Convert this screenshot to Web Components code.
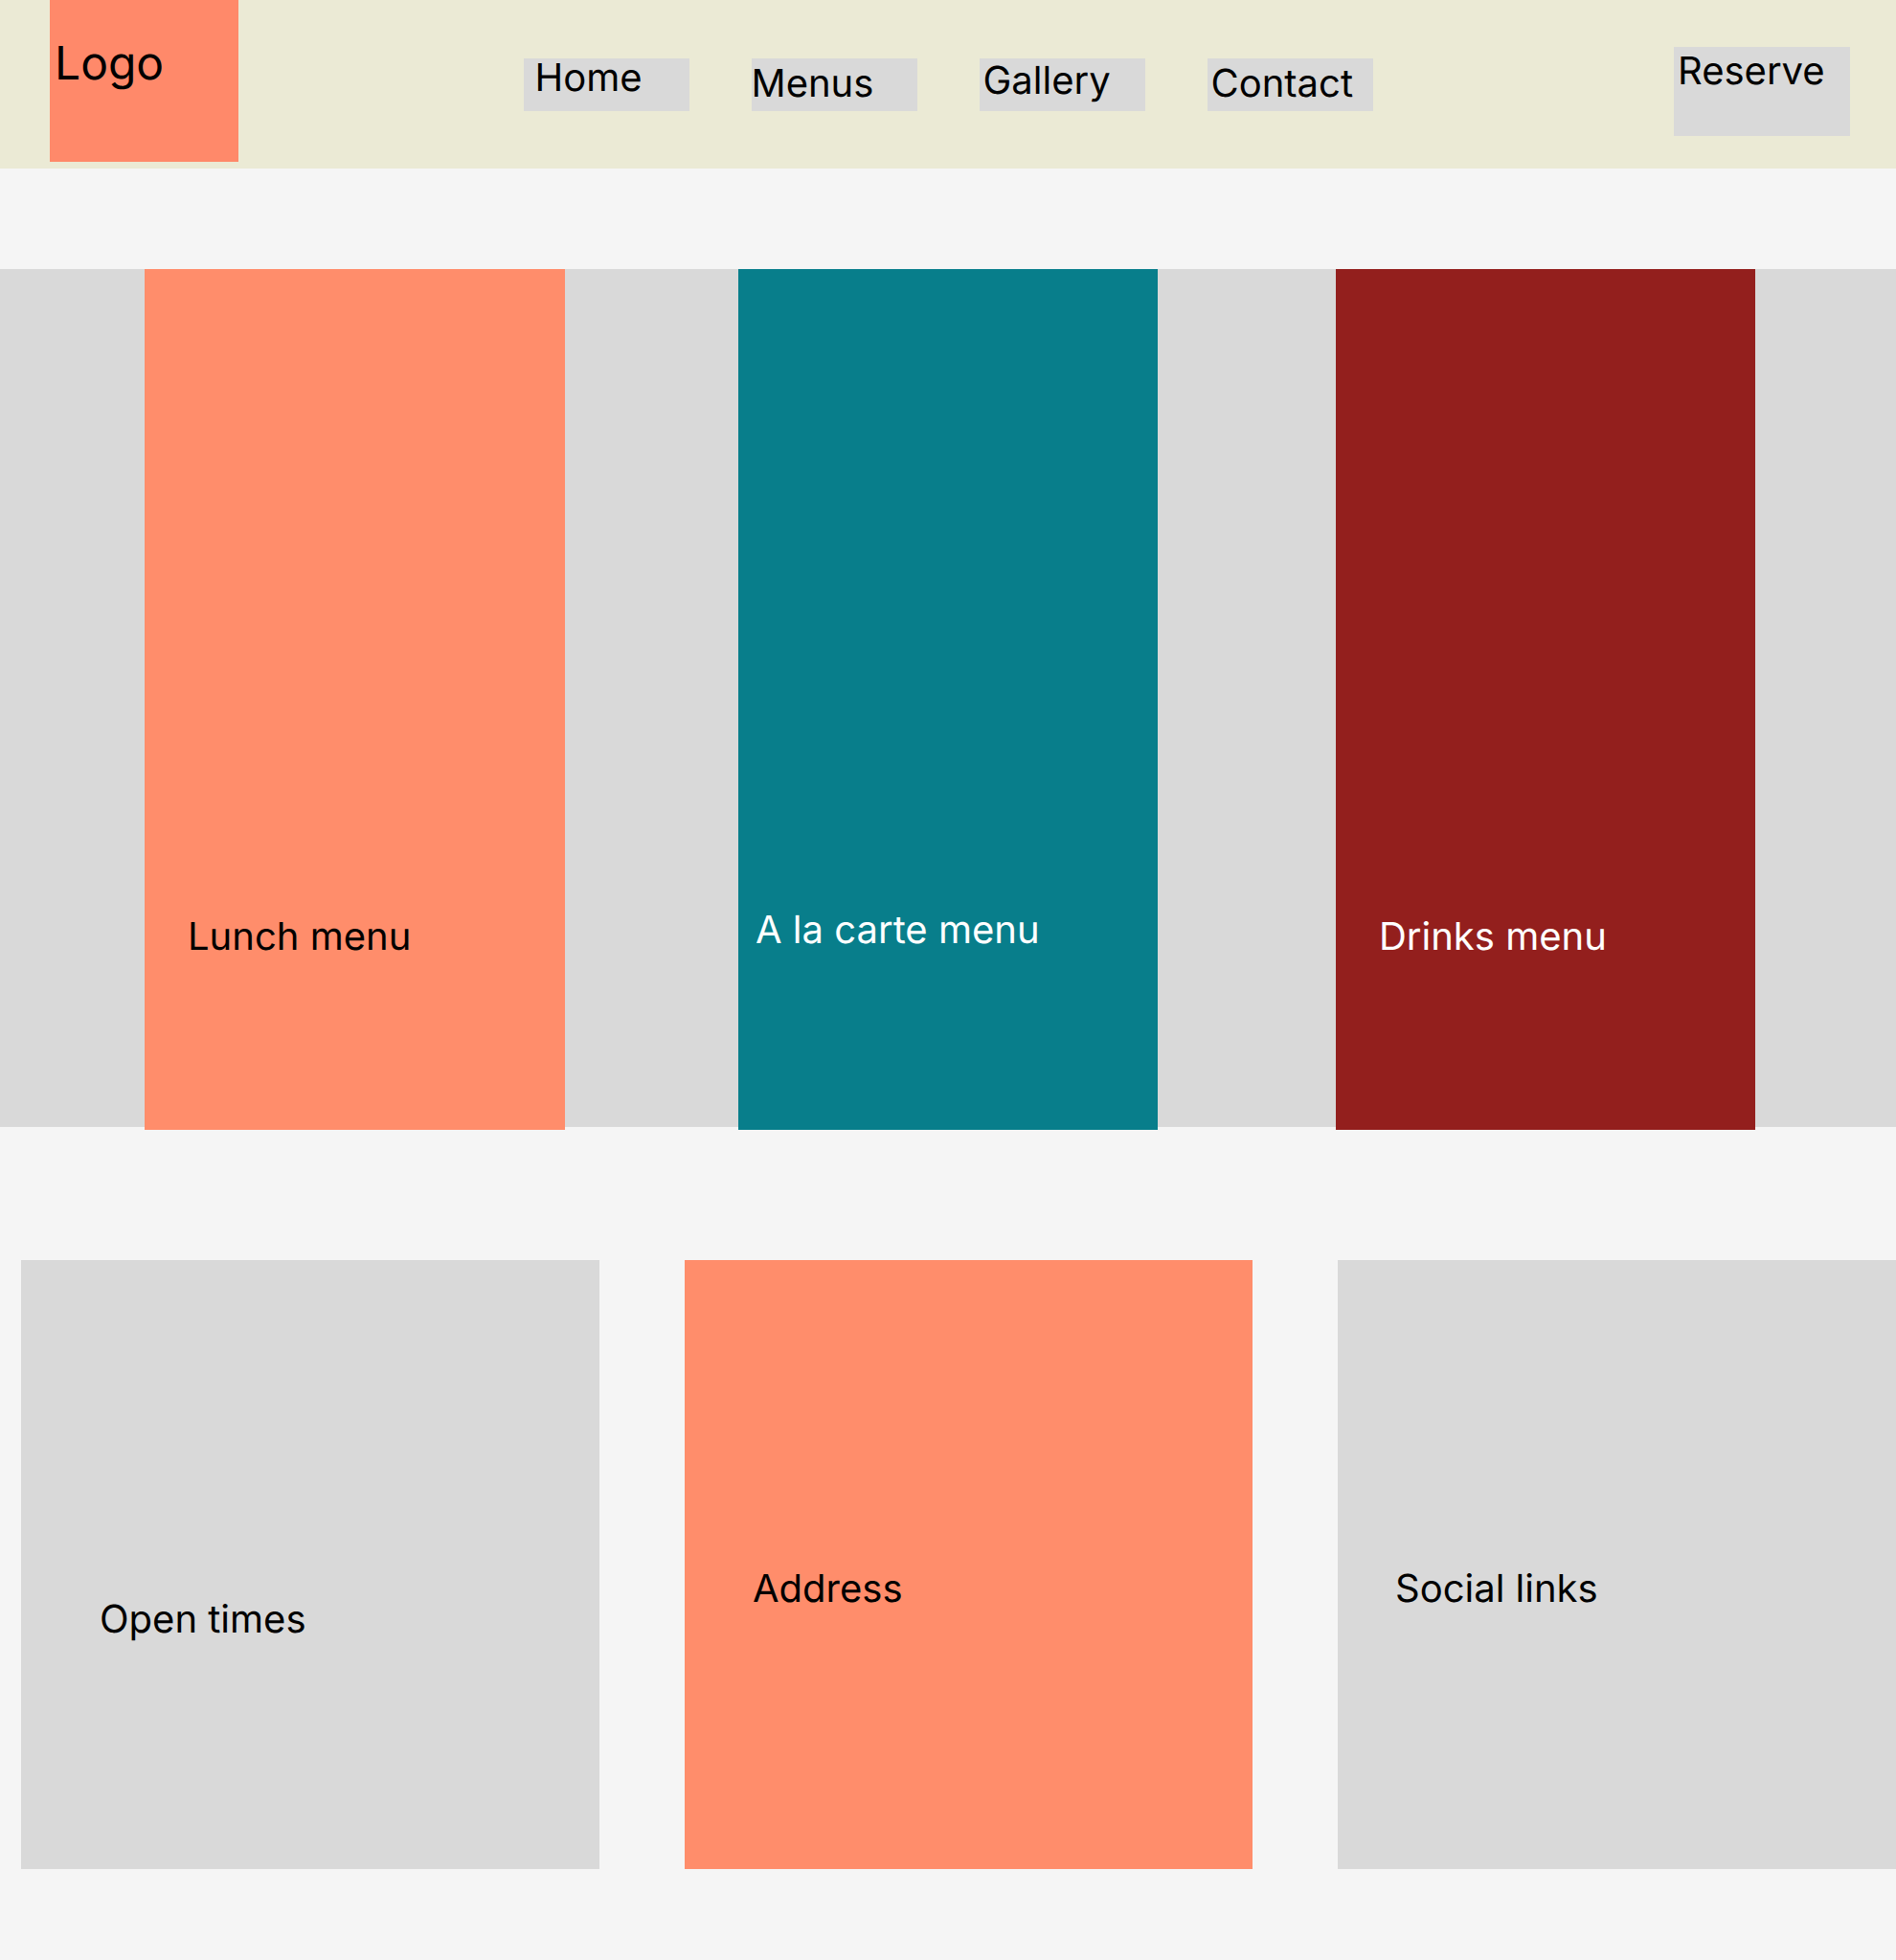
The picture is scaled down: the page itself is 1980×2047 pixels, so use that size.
<!DOCTYPE html>
<html lang="en">
<head>
<meta charset="utf-8">
<meta name="viewport" content="width=device-width, initial-scale=1">
<title>Restaurant</title>
<style>
  :root {
    --cream: #ebead5;
    --page: #f5f5f5;
    --grey: #d9d9d9;
    --coral: #ff896a;
    --salmon: #ff8d6b;
    --teal: #087e8b;
    --wine: #931f1d;
    --text: 40px;
    --text-line: 48px;
  }
  body {
    margin: 0;
    background: var(--page);
    color: #000;
    font-family: Inter, "Liberation Sans", sans-serif;
    font-size: var(--text);
    line-height: var(--text-line);
    text-rendering: geometricPrecision;
  }
</style>
</head>
<body>
<restaurant-page></restaurant-page>

<script>
const define = (name, html) => {
  const template = document.createElement('template');
  template.innerHTML = html;
  customElements.define(name, class extends HTMLElement {
    constructor() {
      super();
      this.attachShadow({ mode: 'open' }).append(template.content.cloneNode(true));
    }
  });
};

define('brand-logo', `
  <style>
    :host { display: block; }
    a {
      display: block;
      box-sizing: border-box;
      width: 197px;
      min-height: 169px;
      padding: 36px 5px;
      background: var(--coral);
      color: inherit;
      font-size: 48px;
      line-height: 60px;
      text-decoration: none;
    }
  </style>
  <a href="#home"><slot></slot></a>
`);

define('nav-item', `
  <style>
    :host { display: block; }
    a {
      display: flex;
      align-items: flex-start;
      box-sizing: border-box;
      width: 173px;
      height: 55px;
      padding-bottom: 9px;
      background: var(--grey);
      color: inherit;
      line-height: 40px;
      text-decoration: none;
    }
    :host([align="center"]) a { align-items: center; }
    :host([align="end"]) a { align-items: flex-end; }
    :host([inset="small"]) a { padding-left: 4px; }
    :host([inset="large"]) a { padding-left: 12px; }
  </style>
  <a href="#"><slot></slot></a>
`);

define('reserve-button', `
  <style>
    :host { display: block; }
    button {
      display: flex;
      align-items: flex-start;
      width: 184px;
      height: 93px;
      padding: 5px 4px;
      border: 0;
      border-radius: 0;
      background: var(--grey);
      color: inherit;
      font: inherit;
      line-height: 40px;
      text-rendering: inherit;
      cursor: pointer;
    }
  </style>
  <button type="button"><slot></slot></button>
`);

define('site-header', `
  <style>
    :host { display: block; background: var(--cream); }
    header {
      display: grid;
      grid-template-columns: 1fr auto 1fr;
      min-height: 176px;
    }
    .brand { padding-left: 52px; }
    nav { display: flex; gap: 65px; align-self: center; }
    .action { justify-self: end; padding: 49px 48px 0 0; }
  </style>
  <header>
    <div class="brand"><brand-logo>Logo</brand-logo></div>
    <nav aria-label="Main">
      <nav-item inset="large">Home</nav-item>
      <nav-item align="end">Menus</nav-item>
      <nav-item align="center" inset="small">Gallery</nav-item>
      <nav-item align="end" inset="small">Contact</nav-item>
    </nav>
    <div class="action"><reserve-button>Reserve</reserve-button></div>
  </header>
`);

define('menu-card', `
  <style>
    :host { display: block; background: var(--salmon); }
    :host([tone="teal"]) { background: var(--teal); color: #fff; }
    :host([tone="wine"]) { background: var(--wine); color: #fff; }
    a {
      display: flex;
      align-items: flex-end;
      box-sizing: border-box;
      min-height: 899px;
      padding: 0 45px 178px;
      color: inherit;
      text-decoration: none;
    }
    :host([tone="teal"]) a { padding: 0 18px 185px; }
  </style>
  <a href="#menus"><slot></slot></a>
`);

define('menu-band', `
  <style>
    :host { display: block; margin-top: 105px; background: var(--grey); }
    section {
      display: grid;
      grid-template-columns: 439fr 181fr 438fr 186fr 438fr;
      padding: 0 147px 0 151px;
    }
    ::slotted(:nth-child(2)) { grid-column: 3; }
    ::slotted(:nth-child(3)) { grid-column: 5; }
    /* the cards hang slightly below the band */
    .band { display: flow-root; height: 896px; }
  </style>
  <div class="band"><section><slot></slot></section></div>
`);

define('info-card', `
  <style>
    :host {
      display: flex;
      align-items: flex-end;
      box-sizing: border-box;
      min-height: 636px;
      padding: 0 60px 269px;
      background: var(--grey);
    }
    :host([tone="salmon"]) { background: var(--salmon); padding-left: 71px; }
    :host([low]) { padding-left: 82px; padding-bottom: 237px; }
    h2 { margin: 0; font: inherit; }
  </style>
  <h2><slot></slot></h2>
`);

define('site-footer', `
  <style>
    :host { display: block; }
    footer {
      display: grid;
      grid-template-columns: 604fr 593fr 583fr;
      column-gap: 89px;
      padding: 139px 0 95px 22px;
    }
  </style>
  <footer><slot></slot></footer>
`);

define('restaurant-page', `
  <style>:host { display: block; }</style>
  <site-header></site-header>
  <main>
    <menu-band>
      <menu-card>Lunch menu</menu-card>
      <menu-card tone="teal">A la carte menu</menu-card>
      <menu-card tone="wine">Drinks menu</menu-card>
    </menu-band>
  </main>
  <site-footer>
    <info-card low>Open times</info-card>
    <info-card tone="salmon">Address</info-card>
    <info-card>Social links</info-card>
  </site-footer>
`);
</script>
</body>
</html>
